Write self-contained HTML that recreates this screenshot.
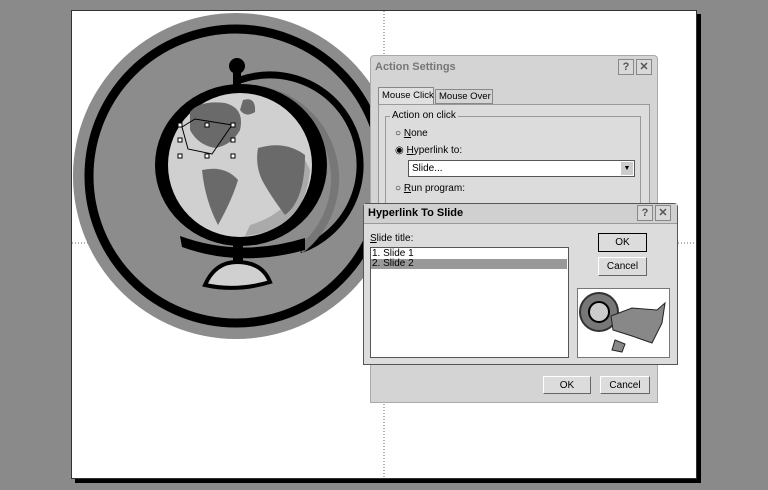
<!DOCTYPE html>
<html><head><style>
*{margin:0;padding:0;box-sizing:border-box}
body{width:768px;height:490px;background:#8a8a8a;position:relative;overflow:hidden;font-family:"Liberation Sans",sans-serif;font-size:10px;color:#000}
.abs{position:absolute;white-space:nowrap}
.btn{position:absolute;background:#dcdcdc;border:1px solid #fff;border-right-color:#666;border-bottom-color:#666;text-align:center;font-size:10px;line-height:17px}
.tb{position:absolute;width:16px;height:16px;background:#d8d8d8;border:1px solid #888;font-size:11px;text-align:center;line-height:14px;font-weight:bold;color:#555}
</style></head><body>
<div class="abs" style="left:75px;top:14px;width:626px;height:469px;background:#000"></div>
<div class="abs" style="left:71px;top:10px;width:626px;height:469px;background:#fff;border:1px solid #333"></div>
<svg class="abs" style="left:0;top:0" width="768" height="490">
<line x1="384" y1="11" x2="384" y2="478" stroke="#666" stroke-dasharray="1,2"/>
<line x1="72" y1="243" x2="696" y2="243" stroke="#666" stroke-dasharray="1,2"/>
<circle cx="236" cy="176" r="163" fill="#8c8c8c"/>
<circle cx="236" cy="176" r="147" fill="none" stroke="#000" stroke-width="9"/>
<path d="M240 80 A86 86 0 0 1 300 250" fill="none" stroke="#000" stroke-width="7"/>
<path d="M260 90 A90 90 0 0 1 300 250" fill="none" stroke="#777" stroke-width="8"/>
<ellipse cx="241" cy="165" rx="86" ry="81" fill="#000"/>
<circle cx="240" cy="165" r="72" fill="#d0d0d0"/>
<path d="M250 225 Q300 210 305 160 L310 170 Q305 230 245 236Z" fill="#aaa"/>
<path d="M190 112 Q200 100 225 103 Q245 108 240 130 Q232 145 215 148 Q198 145 190 130Z" fill="#6a6a6a"/>
<path d="M202 170 Q225 165 238 180 Q232 200 218 225 Q205 200 202 170Z" fill="#6a6a6a"/>
<path d="M258 148 Q285 140 305 155 Q305 200 285 215 Q270 195 262 180 Q255 165 258 148Z" fill="#6a6a6a"/>
<path d="M243 100 Q256 96 255 112 Q246 118 240 110Z" fill="#6a6a6a"/>
<path d="M180 236 Q240 258 305 238 L305 250 Q240 268 182 247Z" fill="#000"/>
<rect x="233" y="62" width="8" height="24" fill="#000"/>
<circle cx="237" cy="66" r="8" fill="#000"/>
<rect x="233" y="245" width="10" height="22" fill="#000"/>
<path d="M205 285 Q215 262 237 262 Q262 262 270 282 Q237 292 205 285Z" fill="#d0d0d0" stroke="#000" stroke-width="4"/>
<path d="M182 127 L195 119 L232 125 L212 154 L188 149Z" fill="none" stroke="#000" stroke-width="1"/>
<g fill="#fff" stroke="#000" stroke-width="1"><rect x="178" y="123" width="4" height="4"/><rect x="205" y="123" width="4" height="4"/><rect x="231" y="123" width="4" height="4"/><rect x="178" y="138" width="4" height="4"/><rect x="231" y="138" width="4" height="4"/><rect x="178" y="154" width="4" height="4"/><rect x="205" y="154" width="4" height="4"/><rect x="231" y="154" width="4" height="4"/></g>
</svg>
<!-- Action settings -->
<div class="abs" style="left:370px;top:55px;width:288px;height:348px;background:#d4d4d4;border:1px solid #aaa;border-radius:4px 4px 0 0"></div>
<div class="abs" style="left:375px;top:61px;font-size:11px;font-weight:bold;color:#777">Action Settings</div>
<div class="tb" style="left:618px;top:59px">?</div><div class="tb" style="left:636px;top:59px">✕</div>
<div class="abs" style="left:378px;top:87px;width:56px;height:18px;background:#e0e0e0;border:1px solid #888;border-bottom:none;padding:2px 3px;font-size:9.5px">Mouse Click</div>
<div class="abs" style="left:435px;top:89px;width:58px;height:15px;border:1px solid #888;padding:1px 3px;font-size:9.5px">Mouse Over</div>
<div class="abs" style="left:378px;top:104px;width:272px;height:260px;border:1px solid #999;background:#dcdcdc"></div>
<div class="abs" style="left:385px;top:116px;width:256px;height:120px;border:1px solid #999"></div>
<div class="abs" style="left:390px;top:110px;background:#dcdcdc;padding:0 2px">Action on click</div>
<div class="abs" style="left:395px;top:128px">○ <u>N</u>one</div>
<div class="abs" style="left:395px;top:145px">◉ <u>H</u>yperlink to:</div>
<div class="abs" style="left:408px;top:160px;width:227px;height:17px;background:#fff;border:1px solid #555;padding:2px 3px">Slide...</div>
<div class="abs" style="left:621px;top:162px;width:12px;height:13px;background:#ccc;font-size:7px;text-align:center;line-height:13px">▼</div>
<div class="abs" style="left:395px;top:183px">○ <u>R</u>un program:</div>
<div class="btn" style="left:543px;top:376px;width:48px;height:18px">OK</div>
<div class="btn" style="left:600px;top:376px;width:50px;height:18px">Cancel</div>
<!-- Hyperlink to slide -->
<div class="abs" style="left:363px;top:203px;width:315px;height:162px;background:#dcdcdc;border:1px solid #555;border-radius:4px 4px 0 0"></div>
<div class="abs" style="left:364px;top:204px;width:313px;height:20px;background:#d0d0d0;border-bottom:1px solid #999"></div>
<div class="abs" style="left:368px;top:207px;font-size:11px;font-weight:bold">Hyperlink To Slide</div>
<div class="tb" style="left:637px;top:205px">?</div><div class="tb" style="left:655px;top:205px">✕</div>
<div class="abs" style="left:370px;top:233px"><u>S</u>lide title:</div>
<div class="abs" style="left:370px;top:247px;width:199px;height:111px;background:#fff;border:1px solid #555"></div>
<div class="abs" style="left:372px;top:249px;line-height:10px">1. Slide 1</div>
<div class="abs" style="left:371px;top:259px;width:196px;height:10px;background:#999;line-height:10px;padding-left:1px">2. Slide 2</div>
<div class="btn" style="left:598px;top:233px;width:49px;height:19px;border:1px solid #000">OK</div>
<div class="btn" style="left:598px;top:257px;width:49px;height:19px">Cancel</div>
<div class="abs" style="left:577px;top:288px;width:93px;height:70px;background:#fff;border:1px solid #777"></div>
<svg class="abs" style="left:577px;top:288px" width="93" height="70">
<circle cx="22" cy="24" r="19" fill="#777" stroke="#333" stroke-width="2"/>
<circle cx="22" cy="24" r="10" fill="#ccc" stroke="#000" stroke-width="2"/>
<path d="M34 28 L55 20 L80 22 L88 15 L85 35 L75 55 L55 48 L36 42Z" fill="#888" stroke="#222" stroke-width="1"/>
<path d="M38 52 L48 56 L45 64 L35 62Z" fill="#888" stroke="#222"/>
</svg>
</body></html>
